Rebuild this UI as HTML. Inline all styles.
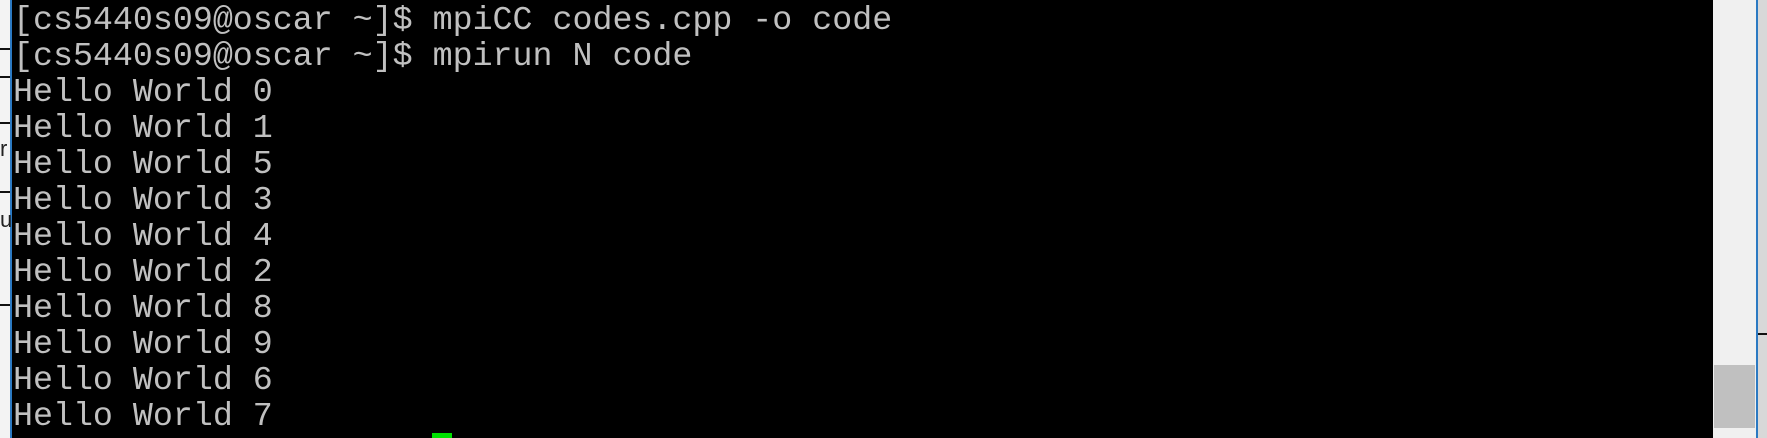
<!DOCTYPE html>
<html><head><meta charset="utf-8"><style>
html,body{margin:0;padding:0;width:1767px;height:438px;overflow:hidden;background:#000}
.left{position:absolute;left:0;top:0;width:10px;height:438px;background:#f3f3f3;border-right:2px solid #2b79c2}
.tick{position:absolute;left:0;width:10px;height:2px;background:#111}
.term{position:absolute;left:12px;top:0;width:1701px;height:438px;background:#000}
pre{margin:0;position:absolute;left:1px;top:2px;font-family:"Liberation Mono",monospace;font-size:33.3px;line-height:36px;color:#c0c0c0}
.cursor{position:absolute;left:432px;top:433px;width:20px;height:5px;background:#00e000}
.sb{position:absolute;left:1713px;top:0;width:43px;height:438px;background:#f0f0f0}
.thumb{position:absolute;left:1714px;top:365px;width:41px;height:63px;background:#c0c0c0}
.blue{position:absolute;left:1756px;top:0;width:2px;height:438px;background:#2b79c2}
.right{position:absolute;left:1758px;top:0;width:9px;height:438px;background:#d8d8d8}
</style></head><body>
<div class="left"></div>
<div class="tick" style="top:48px"></div>
<div class="tick" style="top:76px"></div>
<div class="tick" style="top:122px"></div>
<div class="tick" style="top:191px"></div>
<div class="tick" style="top:304px"></div>
<div style="position:absolute;left:0;top:136px;font:22px 'Liberation Sans',sans-serif;color:#222">r</div>
<div style="position:absolute;left:0;top:207px;font:22px 'Liberation Sans',sans-serif;color:#222">u</div>
<div class="term"><pre>[cs5440s09@oscar ~]$ mpiCC codes.cpp -o code
[cs5440s09@oscar ~]$ mpirun N code
Hello World 0
Hello World 1
Hello World 5
Hello World 3
Hello World 4
Hello World 2
Hello World 8
Hello World 9
Hello World 6
Hello World 7</pre></div>
<div class="cursor"></div>
<div class="sb"></div>
<div class="thumb"></div>
<div class="blue"></div>
<div class="right"></div>
<div style="position:absolute;left:1758px;top:333px;width:9px;height:2px;background:#111"></div>
</body></html>
